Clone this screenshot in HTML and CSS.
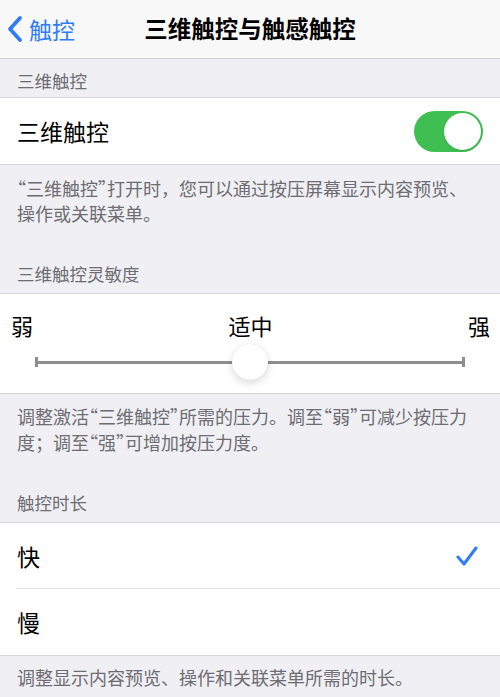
FILE: index.html
```html
<!DOCTYPE html>
<html lang="zh-CN">
<head>
<meta charset="utf-8">
<link rel="stylesheet" href="styles.css">
</head>
<body>
<div class="page">
  <div class="nav">
    <div class="back">
      <svg class="chev" width="20" height="28" viewBox="0 0 20 28"><path d="M15 3 L5 14 L15 25" fill="none" stroke="#2f7cf6" stroke-width="3.8" stroke-linecap="round" stroke-linejoin="round"/></svg>
      <span>触控</span>
    </div>
    <div class="title">三维触控与触感触控</div>
  </div>

  <div class="hdr hdr-first">三维触控</div>
  <div class="group">
    <div class="row">
      <span class="label">三维触控</span>
      <div class="toggle"><div class="knob"></div></div>
    </div>
  </div>
  <div class="ftr"><span class="q">“</span>三维触控<span class="q">”</span>打开时，您可以通过按压屏幕显示内容预览、操作或关联菜单。</div>

  <div class="hdr">三维触控灵敏度</div>
  <div class="group slider-block">
    <div class="slider-labels">
      <span>弱</span><span>适中</span><span>强</span>
    </div>
    <div class="slider">
      <div class="cap"></div>
      <div class="track"></div>
      <div class="cap"></div>
      <div class="thumb"></div>
    </div>
  </div>
  <div class="ftr ftr-two">调整激活<span class="q">“</span>三维触控<span class="q">”</span>所需的压力。调至<span class="q">“</span>弱<span class="q">”</span>可减少按压力度；调至<span class="q">“</span>强<span class="q">”</span>可增加按压力度。</div>

  <div class="hdr">触控时长</div>
  <div class="group">
    <div class="row row-sep">
      <span class="label">快</span>
      <svg class="check" width="22" height="20" viewBox="0 0 22 20"><path d="M2 11 L8 18 L20 2" fill="none" stroke="#2f7cf6" stroke-width="3" stroke-linecap="round" stroke-linejoin="round"/></svg>
    </div>
    <div class="row">
      <span class="label">慢</span>
    </div>
  </div>
  <div class="ftr ftr-last">调整显示内容预览、操作和关联菜单所需的时长。</div>
</div>
</body>
</html>
```

FILE: styles.css
```css
* { box-sizing: border-box; }
html, body { margin: 0; padding: 0; }
body {
  background: #efeff4;
  font-family: "Noto Sans CJK SC", "Noto Sans", sans-serif;
  width: 500px;
  height: 697px;
  overflow: hidden;
}
.page { display: flex; flex-direction: column; }

.nav {
  height: 59px;
  background: #f8f8f8;
  border-bottom: 1px solid #cfcfd3;
  display: flex;
  align-items: center;
  justify-content: center;
  position: relative;
}
.back {
  position: absolute;
  left: 5px;
  top: 14px;
  display: flex;
  align-items: center;
  color: #2f7cf6;
  font-size: 23px;
  line-height: 30px;
  gap: 4px;
}
.title {
  font-size: 23.5px;
  font-weight: 700;
  color: #000;
  line-height: 30px;
  margin-top: -3px;
}

.hdr {
  color: #6d6d72;
  font-size: 17.5px;
  line-height: 24px;
  padding: 36px 17px 7px;
}
.hdr-first { padding-top: 10px; padding-bottom: 4px; }

.group {
  background: #fff;
  border-top: 1px solid #d8d8dc;
  border-bottom: 1px solid #d8d8dc;
}
.row {
  height: 66px;
  display: flex;
  align-items: center;
  justify-content: space-between;
  padding: 0 17px;
  position: relative;
}
.row-sep::after {
  content: "";
  position: absolute;
  left: 16px;
  right: 0;
  bottom: 0;
  height: 1px;
  background: #e0e0e4;
}
.label { font-size: 23px; color: #000; line-height: 30px; }

.toggle {
  width: 69px;
  height: 41px;
  border-radius: 21px;
  background: #3fbf52;
  position: relative;
}
.knob {
  position: absolute;
  right: 2px;
  top: 2px;
  width: 37px;
  height: 37px;
  border-radius: 50%;
  background: #fff;
  box-shadow: 0 1px 2px rgba(0,0,0,0.15);
}

.check { margin-right: 5px; }

.ftr {
  color: #6d6d72;
  font-size: 18px;
  line-height: 25px;
  padding: 11px 28px 0 17px;
}
.ftr-two { line-height: 26px; padding-top: 9px; }
.ftr-last { padding-top: 9px; }
.q { font-feature-settings: "halt" 1; }

.slider-block { height: 101px; padding-top: 16px; }
.slider-labels {
  display: flex;
  justify-content: space-between;
  padding: 0 10px 0 11px;
  font-size: 22px;
  line-height: 30px;
  color: #000;
}
.slider {
  position: relative;
  display: flex;
  align-items: center;
  margin: 4px 35px 0 35px;
  height: 36px;
}
.cap { width: 3px; height: 10px; background: #8e8e8e; }
.track { flex: 1; height: 3px; background: #8e8e8e; }
.thumb {
  position: absolute;
  left: 197px;
  top: 0;
  width: 36px;
  height: 36px;
  border-radius: 50%;
  background: #fff;
  box-shadow: 0 3px 8px rgba(0,0,0,0.15), 0 0 1px rgba(0,0,0,0.12);
}
```
